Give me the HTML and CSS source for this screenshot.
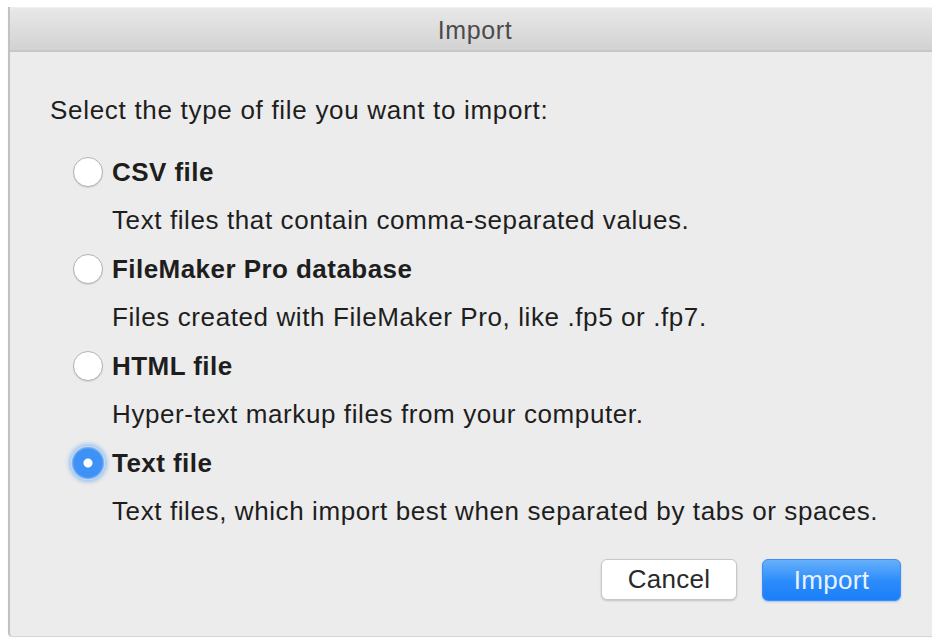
FILE: index.html
```html
<!DOCTYPE html>
<html lang="en">
<head>
<meta charset="utf-8">
<title>Import</title>
<link rel="stylesheet" href="styles.css">
</head>
<body>
<div class="window">
  <div class="titlebar">Import</div>
  <div class="content">
    <p class="prompt">Select the type of file you want to import:</p>
    <div class="options">
      <div class="option">
        <div class="option-head"><span class="radio"></span><span class="option-name">CSV file</span></div>
        <div class="option-desc">Text files that contain comma-separated values.</div>
      </div>
      <div class="option">
        <div class="option-head"><span class="radio"></span><span class="option-name">FileMaker Pro database</span></div>
        <div class="option-desc">Files created with FileMaker Pro, like .fp5 or .fp7.</div>
      </div>
      <div class="option">
        <div class="option-head"><span class="radio"></span><span class="option-name">HTML file</span></div>
        <div class="option-desc">Hyper-text markup files from your computer.</div>
      </div>
      <div class="option">
        <div class="option-head"><span class="radio checked"></span><span class="option-name">Text file</span></div>
        <div class="option-desc">Text files, which import best when separated by tabs or spaces.</div>
      </div>
    </div>
    <div class="buttons">
      <button class="btn btn-cancel">Cancel</button>
      <button class="btn btn-default">Import</button>
    </div>
  </div>
</div>
</body>
</html>
```
FILE: styles.css
```css
html, body {
  margin: 0;
  padding: 0;
  background: #ffffff;
  overflow: hidden;
}

body {
  width: 932px;
  height: 638px;
  font-family: "Liberation Sans", Arial, sans-serif;
  color: #1e1e1e;
}

.window {
  margin: 7px 0 0 8px;
  width: 932px;
  height: 629px;
  background: #ececec;
  border-left: 2px solid #c2c2c2;
  box-sizing: border-box;
  box-shadow: 0 1px 1px rgba(0, 0, 0, 0.18);
  border-bottom-left-radius: 4px;
}

.titlebar {
  height: 45px;
  box-sizing: border-box;
  background: linear-gradient(#e9e8e9, #d3d2d3);
  border-top: 1px solid #f2f2f2;
  border-bottom: 2px solid #c7c7c7;
  border-top-left-radius: 6px;
  text-align: center;
  font-size: 25px;
  line-height: 45px;
  color: #4b4b4b;
  letter-spacing: 0.6px;
}

.content {
  padding: 34px 39px 0 40px;
}

.prompt {
  margin: 0;
  font-size: 26px;
  line-height: 48px;
  letter-spacing: 0.7px;
}

.options {
  margin: 14px 0 0 23px;
}

.option-head {
  display: flex;
  align-items: center;
  gap: 9px;
  height: 48px;
}

.option-name {
  font-weight: bold;
  font-size: 26px;
  letter-spacing: 0.45px;
}

.option-desc {
  height: 49px;
  line-height: 49px;
  padding-left: 39px;
  font-size: 26px;
  letter-spacing: 0.6px;
}

.radio {
  width: 30px;
  height: 30px;
  box-sizing: border-box;
  border-radius: 50%;
  background: #ffffff;
  border: 1px solid #b4b4b4;
  box-shadow: 0 1px 1px rgba(0, 0, 0, 0.12);
  flex: none;
}

.radio.checked {
  width: 34px;
  height: 34px;
  margin: 0 -2px;
  border: none;
  background: radial-gradient(circle, #ffffff 0 4px, #3e92f6 5px 14px, rgba(62, 146, 246, 0.55) 16px, rgba(62, 146, 246, 0) 17px);
  box-shadow: 0 0 4px 2px rgba(80, 155, 250, 0.55);
}

.buttons {
  display: flex;
  justify-content: flex-end;
  gap: 25px;
  margin-top: 23px;
}

.btn {
  font-family: "Liberation Sans", Arial, sans-serif;
  font-size: 26px;
  height: 41px;
  border-radius: 6px;
  padding: 0;
  line-height: 39px;
  letter-spacing: 0.3px;
}

.btn-cancel {
  width: 136px;
  background: #ffffff;
  color: #2a2a2a;
  border: 1px solid #c8c8c8;
  box-shadow: 0 1px 2px rgba(0, 0, 0, 0.18);
}

.btn-default {
  width: 139px;
  height: 42px;
  color: #e9f2ff;
  border: 1px solid #3b8df6;
  background: linear-gradient(#67b0fb, #2a8bfb 55%, #1a7ff9);
  box-shadow: 0 1px 2px rgba(30, 110, 230, 0.35);
}
```
